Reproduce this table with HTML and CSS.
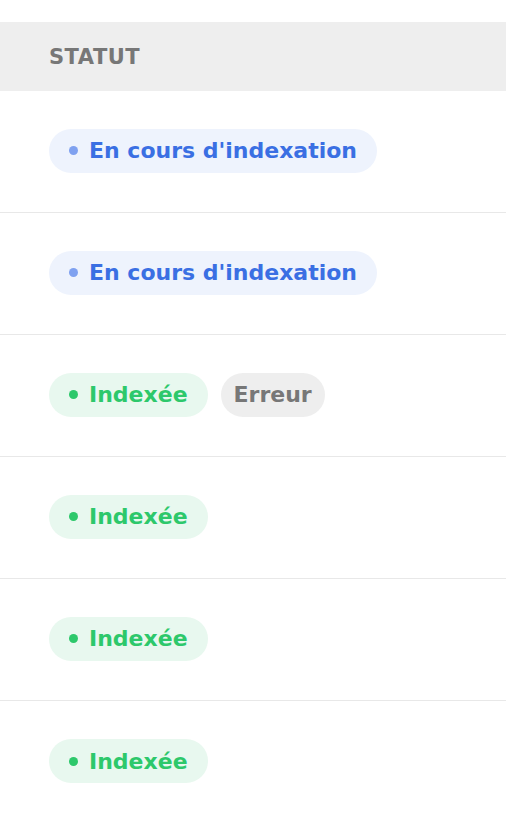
FILE: index.html
```html
<!DOCTYPE html>
<html lang="fr">
<head>
<meta charset="utf-8">
<link rel="stylesheet" href="styles.css">
</head>
<body>
<div class="table">
  <div class="head"><span class="head-label">STATUT</span></div>
  <div class="row"><span class="pill pill-blue"><span class="dot"></span>En cours d'indexation</span></div>
  <div class="row"><span class="pill pill-blue"><span class="dot"></span>En cours d'indexation</span></div>
  <div class="row"><span class="pill pill-green"><span class="dot"></span>Indexée</span><span class="pill pill-gray">Erreur</span></div>
  <div class="row"><span class="pill pill-green"><span class="dot"></span>Indexée</span></div>
  <div class="row"><span class="pill pill-green"><span class="dot"></span>Indexée</span></div>
  <div class="row last"><span class="pill pill-green"><span class="dot"></span>Indexée</span></div>
</div>
</body>
</html>
```
FILE: styles.css
```css
html, body {
  margin: 0;
  padding: 0;
  background: #ffffff;
}
body {
  font-family: "DejaVu Sans", "Noto Sans", sans-serif;
}
.table {
  padding-top: 22px;
}
.head {
  height: 69px;
  background: #eeeeee;
  display: flex;
  align-items: center;
  padding-left: 49px;
}
.head-label {
  font-size: 21px;
  font-weight: 700;
  color: #777777;
  letter-spacing: 0.5px;
}
.row {
  box-sizing: border-box;
  height: 122px;
  padding: 0 0 2px 49px;
  border-bottom: 1px solid #e8e8e8;
  display: flex;
  align-items: center;
  gap: 13px;
}
.row.last {
  border-bottom: none;
}
.pill {
  display: inline-flex;
  align-items: center;
  height: 44px;
  border-radius: 22px;
  padding: 0 20px;
  font-size: 22px;
  font-weight: 700;
  box-sizing: border-box;
}
.dot {
  width: 9px;
  height: 9px;
  border-radius: 50%;
  margin-right: 11px;
}
.pill-blue {
  background: #eef3fd;
  color: #3a6fe3;
}
.pill-blue .dot {
  background: #7fa1f0;
}
.pill-green {
  background: #e8f8ef;
  color: #2dc86b;
}
.pill-green .dot {
  background: #2dc86b;
}
.pill-gray {
  background: #eeeeee;
  color: #777777;
  padding: 0 13px;
}
```
